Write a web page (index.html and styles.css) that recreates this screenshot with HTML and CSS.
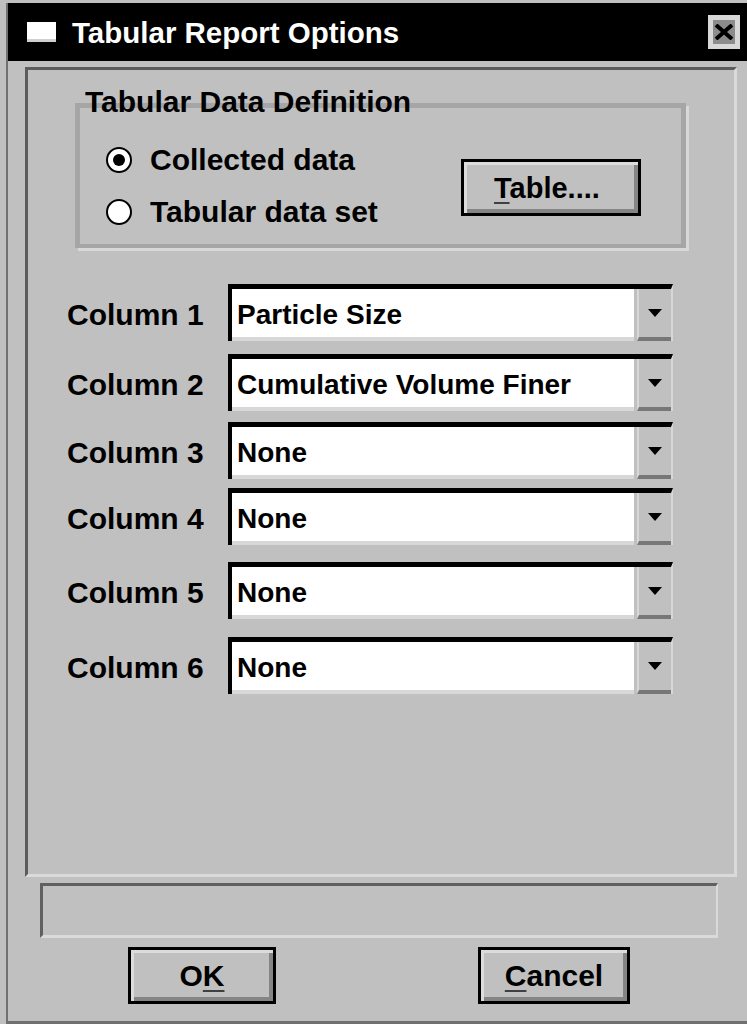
FILE: index.html
```html
<!DOCTYPE html>
<html lang="en">
<head>
  <meta charset="UTF-8">
  <title>Tabular Report Options</title>
  <link rel="stylesheet" href="styles.css">
</head>
<body>

  <div class="window">
    <div class="frame">

      <div class="titlebar">
        <span class="title-icon"></span>
        <span class="title">Tabular Report Options</span>
        <span class="close">
          <svg width="22" height="16" viewBox="0 0 22 16">
            <path d="M3 1 L19 15 M19 1 L3 15" stroke="#000" stroke-width="4" fill="none"/>
          </svg>
        </span>
      </div>

      <div class="content">
        <div class="panel">

          <div class="group">
            <span class="group-caption">Tabular Data Definition</span>
            <div class="radios">
              <label class="radio-row"><span class="radio checked"></span>Collected data</label>
              <label class="radio-row"><span class="radio"></span>Tabular data set</label>
            </div>
            <button class="btn btn-table"><u>T</u>able....</button>
          </div>

          <div class="columns">
            <div class="row">
              <span class="row-label">Column 1</span>
              <div class="combo"><span class="combo-value">Particle Size</span><span class="combo-btn"><i class="arrow"></i></span></div>
            </div>
            <div class="row">
              <span class="row-label">Column 2</span>
              <div class="combo"><span class="combo-value">Cumulative Volume Finer</span><span class="combo-btn"><i class="arrow"></i></span></div>
            </div>
            <div class="row">
              <span class="row-label">Column 3</span>
              <div class="combo"><span class="combo-value">None</span><span class="combo-btn"><i class="arrow"></i></span></div>
            </div>
            <div class="row">
              <span class="row-label">Column 4</span>
              <div class="combo"><span class="combo-value">None</span><span class="combo-btn"><i class="arrow"></i></span></div>
            </div>
            <div class="row">
              <span class="row-label">Column 5</span>
              <div class="combo"><span class="combo-value">None</span><span class="combo-btn"><i class="arrow"></i></span></div>
            </div>
            <div class="row">
              <span class="row-label">Column 6</span>
              <div class="combo"><span class="combo-value">None</span><span class="combo-btn"><i class="arrow"></i></span></div>
            </div>
          </div>

        </div>

        <div class="status"></div>

        <div class="buttons">
          <button class="btn btn-ok">O<u>K</u></button>
          <button class="btn btn-cancel"><u>C</u>ancel</button>
        </div>
      </div>

    </div>
  </div>

</body>
</html>
```

FILE: styles.css
```css
body {
  margin: 0;
  background-color: #c0c0c0;
  font-family: "Liberation Sans", Arial, sans-serif;
  font-weight: bold;
  font-size: 30px;
  color: #000;
}

.window {
  width: 747px;
  height: 1024px;
  box-sizing: border-box;
  padding: 3px 0 0 6px;
}

.frame {
  height: 100%;
  box-sizing: border-box;
  border-left: 2px solid #707070;
  border-bottom: 3px solid #707070;
}

/* title bar */
.titlebar {
  height: 58px;
  background-color: #000;
  color: #fff;
  display: flex;
  align-items: center;
  padding: 0 7px 0 19px;
}

.title-icon {
  width: 29px;
  height: 17px;
  background-color: #fff;
  border-bottom: 3px solid #d0d0d0;
  margin-right: 16px;
}

.title {
  flex: 1;
  font-size: 29.5px;
  line-height: 34px;
  padding-top: 2px;
}

.close {
  width: 22px;
  height: 24px;
  border: 5px solid #d8d8d8;
  background-color: #8c8c8c;
  display: flex;
  align-items: center;
  justify-content: center;
}

/* main area */
.content {
  padding: 6px 10px 0 17px;
}

.panel {
  height: 810px;
  box-sizing: border-box;
  border-top: 3px solid #5c5c5c;
  border-left: 3px solid #5c5c5c;
  border-right: 3px solid #dadada;
  border-bottom: 3px solid #dadada;
  padding: 33px 0 0 0;
}

.group {
  position: relative;
  margin-left: 47px;
  width: 611px;
  height: 145px;
  box-sizing: border-box;
  border: 5px solid #a6a6a6;
  border-bottom-width: 4px;
  box-shadow: 3px 3px 0 #d8d8d8;
  display: flex;
  align-items: flex-start;
}

.group-caption {
  position: absolute;
  left: 5px;
  top: -23px;
  line-height: 34px;
}

.radios {
  display: flex;
  flex-direction: column;
  gap: 12px;
  padding: 32px 0 0 26px;
}

.radio-row {
  display: flex;
  align-items: center;
  height: 40px;
  line-height: 34px;
}

.radio {
  width: 22px;
  height: 22px;
  border: 2px solid #000;
  border-radius: 50%;
  background-color: #fff;
  margin-right: 18px;
  display: flex;
  align-items: center;
  justify-content: center;
}

.radio.checked::after {
  content: "";
  width: 12px;
  height: 12px;
  border-radius: 50%;
  background-color: #000;
}

/* push buttons */
.btn {
  font: inherit;
  color: #000;
  background-color: #c0c0c0;
  border: 3px solid #000;
  box-shadow: inset 3px 3px 0 #dcdcdc, inset -4px -4px 0 #858585;
  padding: 0;
  height: 57px;
  line-height: 34px;
}

.btn u {
  text-decoration-thickness: 2px;
  text-underline-offset: 4px;
  text-decoration-color: #404040;
}

.btn-table {
  width: 180px;
  margin: 51px 40px 0 auto;
  text-align: left;
  padding-left: 30px;
  font-size: 29px;
}

/* column rows */
.columns {
  margin-top: 36px;
  padding-left: 39px;
}

.row {
  display: flex;
  align-items: center;
  height: 57px;
}

.row:nth-child(2) { margin-top: 13px; }
.row:nth-child(3) { margin-top: 11px; }
.row:nth-child(4) { margin-top: 9px; }
.row:nth-child(5) { margin-top: 17px; }
.row:nth-child(6) { margin-top: 18px; }

.row-label {
  width: 161px;
  padding-top: 4px;
}

.combo {
  width: 445px;
  height: 57px;
  box-sizing: border-box;
  display: flex;
  border-top: 5px solid #000;
  border-left: 4px solid #000;
  border-right: 2px solid #d8d8d8;
}

.combo-value {
  flex: 1;
  background-color: #fff;
  border-bottom: 4px solid #d8d8d8;
  padding: 3px 0 0 5px;
  font-size: 28px;
  line-height: 46px;
  margin-right: 3px;
}

.combo-btn {
  width: 32px;
  border-left: 2px solid #d8d8d8;
  border-bottom: 4px solid #777;
  display: flex;
  align-items: center;
  justify-content: center;
}

.arrow {
  width: 0;
  height: 0;
  border-left: 7px solid transparent;
  border-right: 7px solid transparent;
  border-top: 8px solid #000;
}

/* status line and bottom buttons */
.status {
  margin: 6px 19px 0 15px;
  height: 55px;
  box-sizing: border-box;
  border-top: 3px solid #606060;
  border-left: 3px solid #606060;
  border-right: 2px solid #dadada;
  border-bottom: 3px solid #dadada;
}

.buttons {
  display: flex;
  margin-top: 9px;
  padding-left: 103px;
}

.btn-ok {
  width: 148px;
}

.btn-cancel {
  width: 152px;
  margin-left: 202px;
}
```
